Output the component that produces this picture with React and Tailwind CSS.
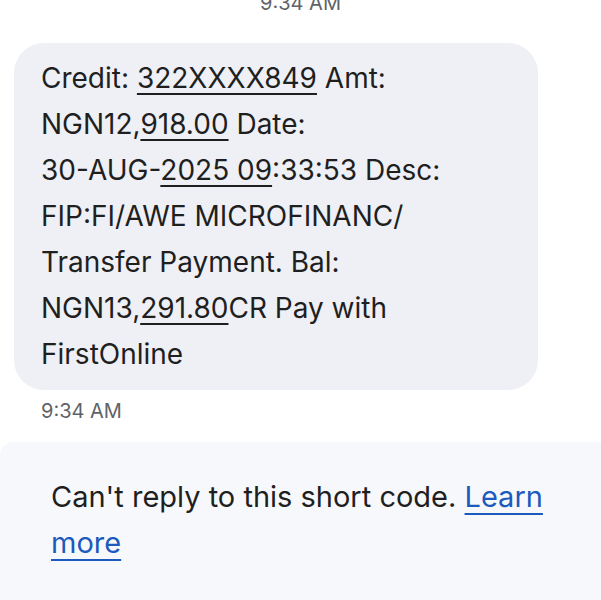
import React from 'react';

// underlined chunks that the messages app detected as numbers
const U = ({ children }) => (
  <span className="underline decoration-[1.5px] underline-offset-[5px]">{children}</span>
);

const App = () => {
  return (
    <div
      className="w-[601px] h-[600px] overflow-hidden bg-white text-[#1f1f1f]"
      style={{ fontFamily: "Inter, Roboto, 'Liberation Sans', sans-serif" }}
    >
      {/* cut-off timestamp above */}
      <div className="-mt-[9px] h-[24px] text-center text-[20px] leading-[24px] text-[#5f6368]">
        9:34 AM
      </div>

      {/* message bubble */}
      <div className="ml-[14px] mt-[28px] w-[524px] rounded-[30px] bg-[#eef0f5] pl-[27px] pr-4 pt-[12px] pb-[13px] text-[28px] leading-[46px]">
        Credit: <U>322XXXX849</U> Amt:
        <br />
        NGN12,<U>918.00</U> Date:
        <br />
        30-AUG-<U>2025 09</U>:33:53 Desc:
        <br />
        FIP:FI/AWE MICROFINANC/
        <br />
        Transfer Payment. Bal:
        <br />
        NGN13,<U>291.80</U>CR Pay with
        <br />
        FirstOnline
      </div>

      <div className="mt-[9px] pl-[41px] text-[20px] leading-[24px] text-[#5f6368]">9:34 AM</div>

      {/* short code notice */}
      <div className="mt-[19px] rounded-tl-[14px] bg-[#f7f8fb] pl-[51px] pr-6 pt-[32px] pb-10 text-[29px] leading-[46px]">
        Can't reply to this short code.{' '}
        <a
          href="#"
          className="text-[#1c5bbd] underline decoration-[2px] underline-offset-[6px]"
        >
          Learn
          <br />
          more
        </a>
      </div>
    </div>
  );
};

export default App;
